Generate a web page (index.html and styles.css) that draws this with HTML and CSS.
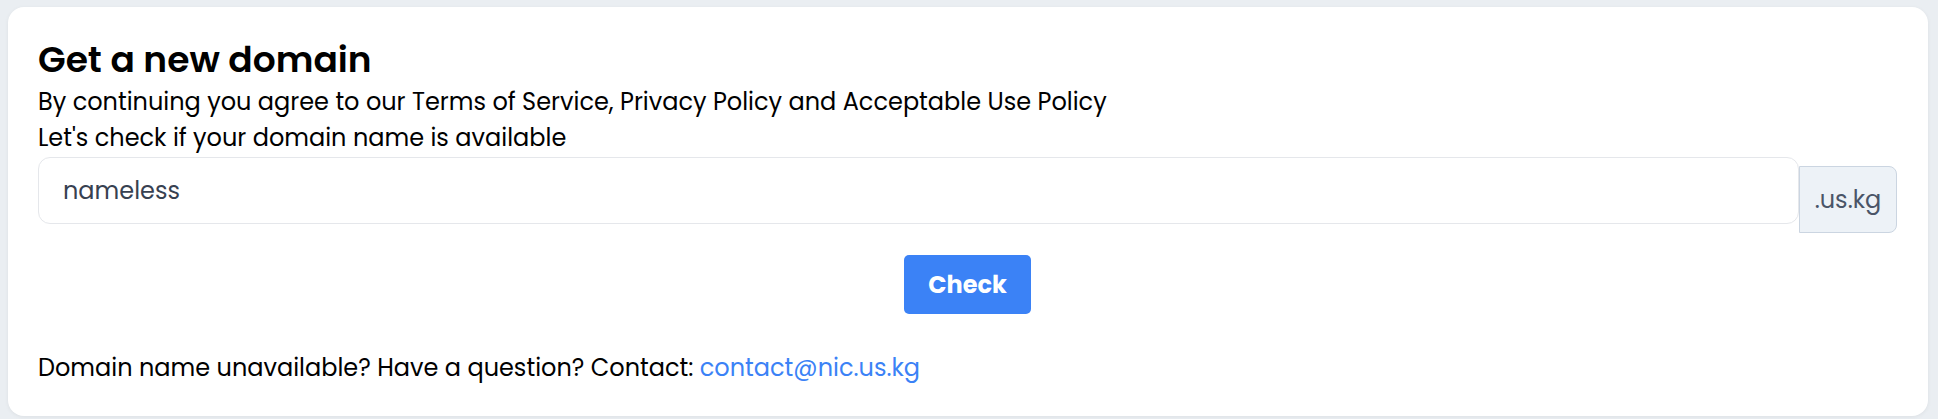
FILE: index.html
```html
<!DOCTYPE html>
<html lang="en">
<head>
  <meta charset="UTF-8" />
  <meta name="viewport" content="width=device-width,initial-scale=1.0" />
  <title>Get a new domain</title>
  <link rel="stylesheet" href="styles.css">
</head>
<body>
  <div class="card">
    <h1>Get a new domain</h1>
    <p class="line">By continuing you agree to our Terms of Service, Privacy Policy and Acceptable Use Policy</p>
    <p class="line">Let's check if your domain name is available</p>

    <div class="domain-row">
      <input class="domain-input" type="text" value="nameless" />
      <span class="suffix">.us.kg</span>
    </div>

    <div class="actions">
      <button class="check-btn">Check</button>
    </div>

    <p class="line footer">Domain name unavailable? Have a question? Contact: <a href="#">contact@nic.us.kg</a></p>
  </div>
</body>
</html>
```

FILE: styles.css
```css
* { box-sizing: border-box; }
body {
  margin: 0;
  padding: 7px 10px 3px 8px;
  background: #eaeef2;
  font-family: "Poppins", "Inter", sans-serif;
  color: #000;
}
.card {
  background: #fff;
  border-radius: 16px;
  height: 409px;
  padding: 33px 31px 30px 30px;
  display: flex;
  flex-direction: column;
  box-shadow: 0 1px 4px rgba(0,0,0,0.06);
}
h1 {
  margin: 0;
  font-size: 36px;
  line-height: 40px;
  font-weight: 600;
}
.line {
  margin: 0;
  font-size: 24px;
  line-height: 36px;
}
h1 + .line { margin-top: 4px; }
.domain-row {
  display: flex;
  align-items: flex-start;
  margin-top: 1px;
}
.domain-input {
  flex: 1;
  height: 67px;
  border: 1px solid #e5e7eb;
  border-radius: 12px;
  padding: 0 24px;
  font-family: inherit;
  font-size: 24px;
  color: #374151;
  outline: none;
}
.suffix {
  margin-top: 9px;
  width: 98px;
  height: 67px;
  background: #edf2f7;
  border: 1px solid #cbd5e1;
  border-radius: 0 8px 8px 0;
  display: flex;
  align-items: center;
  justify-content: center;
  font-size: 24px;
  color: #4a5568;
}
.actions {
  display: flex;
  justify-content: center;
  margin-top: 22px;
}
.check-btn {
  width: 127px;
  height: 59px;
  background: #3b82f6;
  border: none;
  border-radius: 5px;
  color: #fff;
  font-family: inherit;
  font-size: 24px;
  font-weight: 700;
  cursor: pointer;
}
.footer { margin-top: 36px; }
.footer a {
  color: #3b82f6;
  text-decoration: none;
}
```
